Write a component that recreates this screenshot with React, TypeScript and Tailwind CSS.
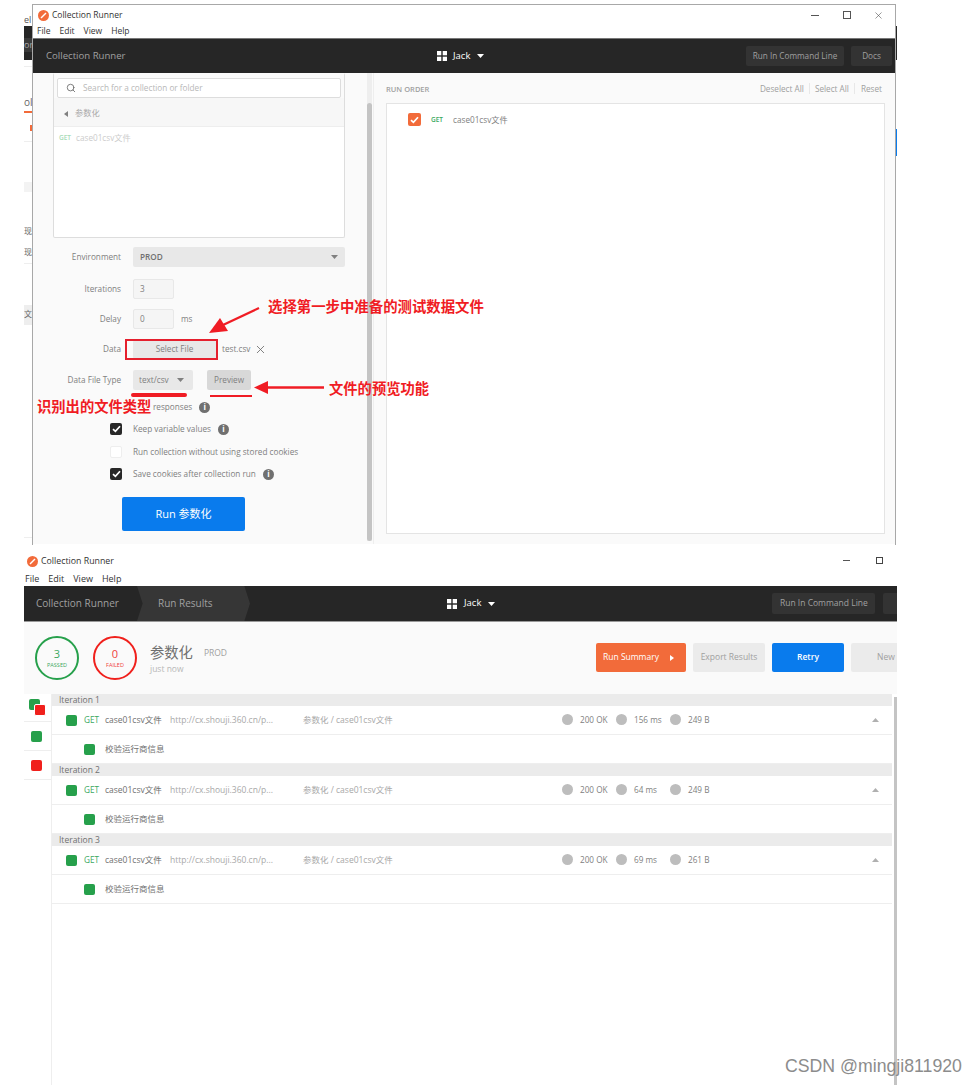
import { Search, X } from 'lucide-react';

const results = [
  { label: 'Iteration 1', time: '156 ms', size: '249 B' },
  { label: 'Iteration 2', time: '64 ms', size: '249 B' },
  { label: 'Iteration 3', time: '69 ms', size: '261 B' },
];

const checks = [
  { label: 'Keep variable values', checked: true, info: true },
  { label: 'Run collection without using stored cookies', checked: false, info: false },
  { label: 'Save cookies after collection run', checked: true, info: true },
];

function Logo() {
  return (
    <svg width="11" height="11" viewBox="0 0 11 11" className="shrink-0">
      <circle cx="5.5" cy="5.5" r="5.5" fill="#f26b3a" />
      <path d="M3 8 L8 3" stroke="#fff" strokeWidth="1.4" />
    </svg>
  );
}

function GridIcon() {
  return (
    <svg width="10" height="10" viewBox="0 0 10 10" className="shrink-0">
      <rect width="4.3" height="4.3" fill="#fff" />
      <rect x="5.7" width="4.3" height="4.3" fill="#fff" />
      <rect y="5.7" width="4.3" height="4.3" fill="#fff" />
      <rect x="5.7" y="5.7" width="4.3" height="4.3" fill="#fff" />
    </svg>
  );
}

function Caret({ color = '#808080' }: { color?: string }) {
  return (
    <svg width="7" height="4" viewBox="0 0 7 4" className="shrink-0">
      <path d="M0 0 H7 L3.5 4 Z" fill={color} />
    </svg>
  );
}

function Info() {
  return (
    <span className="flex h-[11px] w-[11px] items-center justify-center rounded-full bg-[#707070] text-[8px] leading-none font-bold text-white">
      i
    </span>
  );
}

function Tick() {
  return (
    <svg width="9" height="8" viewBox="0 0 9 8">
      <path d="M1 4.2 L3.4 6.4 L8 1.2" stroke="#fff" strokeWidth="1.7" fill="none" />
    </svg>
  );
}

function FormRow({ label, children, className }: { label: string; children: React.ReactNode; className: string }) {
  return (
    <div className={`flex items-center ${className}`}>
      <span className="w-[68px] text-right text-[8.2px] text-[#808080]">{label}</span>
      <div className="ml-[12px] flex items-center">{children}</div>
    </div>
  );
}

function Green({ className = '' }: { className?: string }) {
  return <span className={`block h-[10px] w-[10px] rounded-[2px] bg-[#26a04b] ${className}`} />;
}

function Stat({ children }: { children: React.ReactNode }) {
  return (
    <span className="flex w-[54px] items-center">
      <span className="h-[11px] w-[11px] rounded-full bg-[#bdbdbd]" />
      <span className="ml-[7px] text-[8.2px] text-[#808080]">{children}</span>
    </span>
  );
}

function TopStrip() {
  return (
    <div className="flex w-[8px] shrink-0 flex-col overflow-hidden text-[9px] leading-none whitespace-nowrap text-[#555]">
      <span className="mt-[15px] h-[10px]">el</span>
      <div className="mt-[1px] flex h-[34px] flex-col bg-[#262626]">
        <span className="mt-[12px] h-[14px] bg-[#3a3a3a] pt-[2px] text-[#aaa]">or</span>
      </div>
      <div className="mt-[6px] h-[1px] bg-[#eee]" />
      <span className="mt-[30px] h-[10px] text-[10px] text-[#666]">ol</span>
      <div className="mt-[4px] h-[2px] bg-[#f26b3a]" />
      <div className="mt-[12px] h-[6px] w-[2px] self-end bg-[#f26b3a]" />
      <div className="mt-[10px] h-[1px] bg-[#eee]" />
      <div className="mt-[40px] h-[10px] bg-[#f3f3f3]" />
      <span className="mt-[35px] h-[12px] text-[8px] text-[#666]">现</span>
      <span className="mt-[9px] h-[12px] text-[8px] text-[#666]">现</span>
      <div className="mt-[3px] h-[1px] bg-[#eee]" />
      <span className="mt-[41px] h-[20px] bg-[#eee] pt-[5px] text-[8px] text-[#666]">文</span>
      <div className="mt-[212px] h-[1px] bg-[#eee]" />
    </div>
  );
}

function TopWindow() {
  return (
    <div className="mt-[4px] flex w-[864px] shrink-0 flex-col border-x border-t border-[#a8a8a8] bg-white">
      <div className="flex h-[20px] items-center pl-[5px]">
        <Logo />
        <span className="ml-[3px] text-[8.5px] text-[#333]">Collection Runner</span>
        <div className="mr-[11px] ml-auto flex items-center text-[#444]">
          <span className="h-[1px] w-[8px] bg-[#555]" />
          <span className="ml-[24px] h-[8px] w-[8px] border border-[#555]" />
          <X size={11} strokeWidth={1.2} className="ml-[22px]" />
        </div>
      </div>
      <div className="flex h-[13px] items-center gap-[9px] pl-[4px] text-[8.5px] text-[#333]">
        <span>File</span>
        <span>Edit</span>
        <span>View</span>
        <span>Help</span>
      </div>
      <div className="flex h-[35px] items-center border-t border-[#777] bg-[#262626] pr-[3px] pl-[13px]">
        <span className="w-[79px] shrink-0 text-[9.6px] whitespace-nowrap text-[#a0a0a0]">Collection Runner</span>
        <div className="ml-[312px] flex items-center">
          <GridIcon />
          <span className="mr-[7px] ml-[6px] text-[9.5px] text-white">Jack</span>
          <Caret color="#ffffff" />
        </div>
        <button className="ml-auto h-[20px] w-[98px] rounded-[2px] bg-[#333] text-[8.2px] text-[#a0a0a0]">
          Run In Command Line
        </button>
        <button className="ml-[7px] h-[20px] w-[41px] rounded-[2px] bg-[#333] text-[8.2px] text-[#a0a0a0]">
          Docs
        </button>
      </div>
      <div className="flex h-[471px] bg-[#fafafa]">
        <div className="w-[334px] shrink-0 pl-[20px]">
          <div className="h-[165px] w-[292px] rounded-[2px] border border-t-0 border-[#ddd] bg-white">
            <div className="bg-[#fafafa] px-[3px] pt-[5px]">
              <div className="flex h-[20px] items-center rounded-[2px] border border-[#ddd] bg-white pl-[8px]">
                <Search size={10} className="text-[#666]" />
                <span className="ml-[7px] text-[8.2px] text-[#b8b8b8]">Search for a collection or folder</span>
              </div>
            </div>
            <div className="flex h-[29px] items-center border-b border-[#eee] bg-[#f7f7f7] pt-[3px] pl-[10px]">
              <span className="h-0 w-0 border-y-[3px] border-r-[4px] border-y-transparent border-r-[#808080]" />
              <span className="ml-[7px] text-[8.2px] text-[#aaa]">参数化</span>
            </div>
            <div className="flex items-center pt-[4px] pl-[5px] leading-[14px]">
              <span className="text-[6.5px] font-semibold text-[#a8dcb8]">GET</span>
              <span className="ml-[5px] text-[8.2px] text-[#ccc]">case01csv文件</span>
            </div>
          </div>
          <FormRow label="Environment" className="mt-[9px] h-[20px]">
            <div className="flex h-[20px] w-[212px] items-center justify-between rounded-[2px] bg-[#e8e8e8] pr-[7px] pl-[7px] text-[8.2px] font-semibold text-[#707070]">
              PROD
              <Caret />
            </div>
          </FormRow>
          <FormRow label="Iterations" className="mt-[12px] h-[20px]">
            <div className="flex h-[20px] w-[41px] items-center rounded-[2px] border border-[#e8e8e8] bg-[#f5f5f5] pl-[6px] text-[8.2px] text-[#808080]">
              3
            </div>
          </FormRow>
          <FormRow label="Delay" className="mt-[10px] h-[20px]">
            <div className="flex h-[20px] w-[41px] items-center rounded-[2px] border border-[#e8e8e8] bg-[#f5f5f5] pl-[6px] text-[8.2px] text-[#808080]">
              0
            </div>
            <span className="ml-[7px] text-[8.2px] text-[#808080]">ms</span>
          </FormRow>
          <FormRow label="Data" className="mt-[10px] h-[21px]">
            <button className="h-[19px] w-[83px] rounded-[2px] bg-[#e8e8e8] text-[8.2px] text-[#808080]">Select File</button>
            <span className="ml-[6px] text-[8.2px] text-[#808080]">test.csv</span>
            <X size={13} strokeWidth={1.5} className="ml-[4px] text-[#666]" />
          </FormRow>
          <FormRow label="Data File Type" className="mt-[10px] h-[20px]">
            <div className="flex h-[20px] w-[60px] items-center justify-between rounded-[2px] bg-[#e8e8e8] pr-[9px] pl-[6px] text-[8.2px] text-[#808080]">
              text/csv
              <Caret />
            </div>
            <button className="ml-[14px] h-[20px] w-[44px] rounded-[2px] bg-[#d8d8d8] text-[8.2px] text-[#808080]">Preview</button>
          </FormRow>
          <div className="mt-[6px] flex flex-col pl-[57px]">
            {/* the checkbox and first word of this row sit under the red note */}
            <div className="flex h-[22.3px] items-center pl-[43px]">
              <span className="text-[8.2px] text-[#808080]">responses</span>
              <span className="ml-[7px]">
                <Info />
              </span>
            </div>
            {checks.map((c) => (
              <div key={c.label} className="flex h-[22.3px] items-center">
                <span
                  className={`flex h-[12px] w-[12px] items-center justify-center rounded-[2px] ${
                    c.checked ? 'bg-[#282828]' : 'border border-[#eee] bg-white'
                  }`}
                >
                  {c.checked && <Tick />}
                </span>
                <span className="ml-[11px] text-[8.2px] text-[#808080]">{c.label}</span>
                {c.info && (
                  <span className="ml-[7px]">
                    <Info />
                  </span>
                )}
              </div>
            ))}
          </div>
          <button className="mt-[12px] ml-[69px] h-[34px] w-[123px] rounded-[2px] bg-[#097bed] text-[11px] text-white">
            Run 参数化
          </button>
        </div>
        <div className="h-[468px] w-[5px] shrink-0 bg-[#eee]">
          <div className="mt-[30px] h-[438px] rounded-full bg-[#c4c4c4]" />
        </div>
        <div className="ml-[1px] flex w-[522px] shrink-0 flex-col border-l border-[#eee] pr-[10px] pl-[12px]">
          <div className="flex h-[30px] items-end pr-[3px] pb-[8px]">
            <span className="text-[7.5px] font-semibold text-[#a0a0a0]">RUN ORDER</span>
            <div className="ml-auto flex items-center text-[8.2px] text-[#a0a0a0]">
              <span>Deselect All</span>
              <span className="mx-[5px] h-[11px] w-[1px] bg-[#e8e8e8]" />
              <span>Select All</span>
              <span className="mx-[5.5px] h-[11px] w-[1px] bg-[#e8e8e8]" />
              <span>Reset</span>
            </div>
          </div>
          <div className="flex h-[431px] items-start border border-[#e4e4e4] bg-white pt-[9px] pl-[21px]">
            <span className="flex h-[13px] w-[13px] items-center justify-center rounded-[2px] bg-[#f26b3a]">
              <Tick />
            </span>
            <span className="ml-[10px] text-[6.5px] leading-[13px] font-semibold text-[#3aa75f]">GET</span>
            <span className="ml-[10px] text-[8.2px] leading-[13px] text-[#808080]">case01csv文件</span>
          </div>
        </div>
      </div>
    </div>
  );
}

function TopRightStrip() {
  return (
    <div className="flex w-[1px] shrink-0 flex-col">
      <div className="mt-[26px] h-[34px] bg-[#262626]" />
      <div className="mt-[69px] h-[27px] bg-[#097bed]" />
    </div>
  );
}

function ResultRows() {
  return (
    <div className="flex min-w-0 flex-1 flex-col pr-[2px]">
      {results.map((r) => (
        <div key={r.label}>
          <div className="flex h-[12px] items-center bg-[#ebebeb] pl-[7px] text-[8.5px] text-[#707070]">{r.label}</div>
          <div className="flex h-[29px] items-center border-b border-[#eee] pl-[14px]">
            <Green className="h-[11px] w-[11px]" />
            <span className="ml-[7px] w-[15px] text-[8.2px] text-[#3aa75f]">GET</span>
            <span className="ml-[6px] w-[65px] text-[8.5px] whitespace-nowrap text-[#707070]">case01csv文件</span>
            <span className="w-[133px] text-[8.5px] whitespace-nowrap text-[#a8a8a8]">http://cx.shouji.360.cn/p...</span>
            <span className="w-[259px] text-[8.5px] text-[#a8a8a8]">参数化 / case01csv文件</span>
            <div className="flex">
              <Stat>200 OK</Stat>
              <Stat>{r.time}</Stat>
              <Stat>{r.size}</Stat>
            </div>
            <svg width="7" height="4" viewBox="0 0 7 4" className="mr-[13px] ml-auto">
              <path d="M0 4 H7 L3.5 0 Z" fill="#b0b0b0" />
            </svg>
          </div>
          <div className="flex h-[29px] items-center border-b border-[#eee] pl-[32px]">
            <Green className="h-[11px] w-[11px]" />
            <span className="ml-[10px] text-[8.5px] text-[#707070]">校验运行商信息</span>
          </div>
        </div>
      ))}
    </div>
  );
}

function BottomWindow() {
  return (
    <div className="ml-[24px] flex h-[540px] w-[873px] flex-col overflow-hidden">
      <div className="flex h-[27px] shrink-0 items-end pb-[5px] pl-[3px]">
        <Logo />
        <span className="ml-[3px] text-[8.8px] leading-[11px] text-[#333]">Collection Runner</span>
        <div className="mr-[14px] ml-auto flex items-center gap-[26px] self-center pt-[8px]">
          <span className="h-[1px] w-[7px] bg-[#555]" />
          <span className="h-[7px] w-[7px] border border-[#444]" />
        </div>
      </div>
      <div className="flex h-[14px] shrink-0 items-center gap-[9px] pl-[1px] text-[9px] text-[#333]">
        <span>File</span>
        <span>Edit</span>
        <span>View</span>
        <span>Help</span>
      </div>
      <div className="flex h-[36px] shrink-0 items-center overflow-hidden border-b border-[#999] bg-[#262626] pl-[12px]">
        <span className="w-[83px] shrink-0 text-[10px] whitespace-nowrap text-[#a0a0a0]">Collection Runner</span>
        <div className="ml-[18px] flex h-full w-[113px] shrink-0 items-center bg-[#363636] pl-[21px] [clip-path:polygon(0_0,95%_0,100%_50%,95%_100%,0_100%,5%_50%)]">
          <span className="text-[10px] whitespace-nowrap text-[#a0a0a0]">Run Results</span>
        </div>
        <div className="ml-[197px] flex shrink-0 items-center">
          <GridIcon />
          <span className="mr-[7px] ml-[7px] text-[9.5px] text-white">Jack</span>
          <Caret color="#ffffff" />
        </div>
        <button className="ml-[277px] h-[21px] w-[103px] shrink-0 rounded-[2px] bg-[#333] text-[8.5px] whitespace-nowrap text-[#a0a0a0]">
          Run In Command Line
        </button>
        <span className="ml-[8px] h-[21px] w-[20px] shrink-0 rounded-l-[2px] bg-[#333]" />
      </div>
      <div className="flex h-[72px] shrink-0 items-start bg-[#fafafa] pt-[14px] pl-[11px]">
        <div className="flex h-[44px] w-[44px] flex-col items-center justify-center rounded-full border-2 border-[#26a04b] text-[#3aa75f]">
          <span className="text-[11px] leading-[14px]">3</span>
          <span className="text-[5.5px] leading-[8px]">PASSED</span>
        </div>
        <div className="ml-[14px] flex h-[44px] w-[44px] flex-col items-center justify-center rounded-full border-2 border-[#f0201c] text-[#f0403c]">
          <span className="text-[11px] leading-[14px]">0</span>
          <span className="text-[5.5px] leading-[8px]">FAILED</span>
        </div>
        <div className="mt-[7px] ml-[13px] flex flex-col">
          <div className="flex items-center">
            <span className="text-[14.3px] leading-[20px] text-[#707070]">参数化</span>
            <span className="ml-[11px] text-[8.5px] text-[#a0a0a0]">PROD</span>
          </div>
          <span className="text-[8.5px] leading-[12px] text-[#b8b8b8]">just now</span>
        </div>
        <div className="mt-[7px] ml-auto flex shrink-0 items-center gap-[7px]">
          <button className="flex h-[29px] w-[90px] items-center rounded-[2px] bg-[#f26b3a] pl-[7px] text-[8.5px] text-white">
            Run Summary
            <span className="ml-[11px] h-0 w-0 border-y-[3px] border-l-[4px] border-y-transparent border-l-white" />
          </button>
          <button className="h-[29px] w-[72px] rounded-[2px] bg-[#ebebeb] text-[8.5px] text-[#a0a0a0]">Export Results</button>
          <button className="h-[29px] w-[72px] rounded-[2px] bg-[#097bed] text-[8.5px] font-semibold text-white">Retry</button>
          <button className="h-[29px] w-[46px] rounded-l-[2px] bg-[#ebebeb] pl-[26px] text-left text-[8.5px] text-[#a0a0a0]">New</button>
        </div>
      </div>
      <div className="flex min-h-0 flex-1">
        <div className="flex w-[28px] shrink-0 flex-col border-r border-[#eee]">
          <div className="flex h-[28px] items-center justify-center border-b border-[#eee]">
            <span className="relative block h-[17px] w-[17px]">
              <Green className="absolute top-0 left-0 h-[11px] w-[11px]" />
              <span className="absolute right-0 bottom-0 block h-[12px] w-[12px] rounded-[2px] border border-white bg-[#f0201c]" />
            </span>
          </div>
          <div className="flex h-[29px] items-center justify-center border-b border-[#eee] pr-[2px]">
            <Green className="h-[11px] w-[11px]" />
          </div>
          <div className="flex h-[29px] items-center justify-center border-b border-[#eee] pr-[2px]">
            <span className="block h-[11px] w-[11px] rounded-[2px] bg-[#f0201c]" />
          </div>
        </div>
        <ResultRows />
        <div className="mt-[3px] w-[3px] shrink-0 bg-[#c4c4c4]" />
      </div>
    </div>
  );
}

function Annotations() {
  return (
    <>
      <div className="absolute top-[339px] left-[125px] h-[21px] w-[93px] border-2 border-[#e5202e]" />
      <div className="absolute top-[393px] left-[131px] h-[4px] w-[56px] rounded-full bg-[#f01c24]" />
      <div className="absolute top-[395px] left-[210px] h-[2px] w-[42px] bg-[#f01c24]" />
      <svg width="70" height="40" viewBox="0 0 70 40" className="absolute top-[300px] left-[205px]">
        <path d="M54 8 L18 25" stroke="#f01c24" strokeWidth="2.2" />
        <path d="M4 33 L15 18 L23 31 Z" fill="#f01c24" />
      </svg>
      <svg width="72" height="18" viewBox="0 0 72 18" className="absolute top-[379px] left-[254px]">
        <path d="M12 8.5 H70" stroke="#f01c24" strokeWidth="2.4" />
        <path d="M0 8.5 L14 2 L14 15 Z" fill="#f01c24" />
      </svg>
      <span className="absolute top-[297px] left-[268px] text-[14.4px] leading-[20px] font-bold whitespace-nowrap text-[#f01c24]">
        选择第一步中准备的测试数据文件
      </span>
      <span className="absolute top-[379px] left-[329px] text-[14.3px] leading-[20px] font-bold whitespace-nowrap text-[#f01c24]">
        文件的预览功能
      </span>
      <span className="absolute top-[397px] left-[37px] text-[14.3px] leading-[20px] font-bold whitespace-nowrap text-[#f01c24]">
        识别出的文件类型
      </span>
      <span className="absolute top-[1056px] left-[785px] font-['Liberation_Sans',sans-serif] text-[17.7px] leading-[20px] whitespace-nowrap text-[#8c8c8c]">
        CSDN @mingji811920
      </span>
    </>
  );
}

export default function App() {
  return (
    <div className="relative h-[1085px] w-[977px] overflow-hidden bg-white font-['Open_Sans','Noto_Sans_CJK_SC',sans-serif]">
      <div className="flex h-[545px] overflow-hidden pl-[24px]">
        <TopStrip />
        <TopWindow />
        <TopRightStrip />
      </div>
      <BottomWindow />
      <Annotations />
    </div>
  );
}
